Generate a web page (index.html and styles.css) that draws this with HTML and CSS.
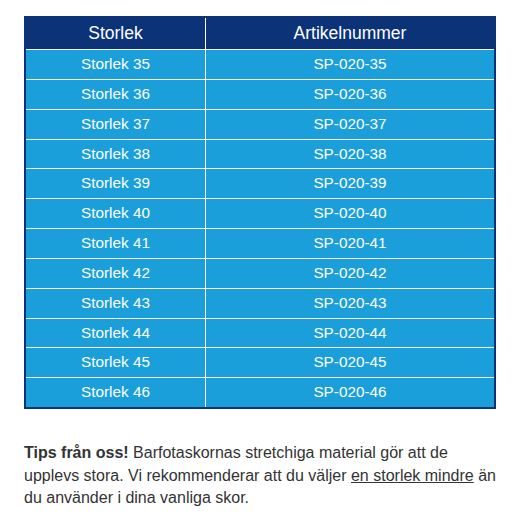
FILE: index.html
```html
<!DOCTYPE html>
<html lang="sv">
<head>
<meta charset="utf-8">
<title>Storlekar</title>
<link rel="stylesheet" href="styles.css">
</head>
<body>
<table class="sizes">
  <colgroup><col class="col-size"><col class="col-art"></colgroup>
  <thead>
    <tr><th>Storlek</th><th>Artikelnummer</th></tr>
  </thead>
  <tbody>
    <tr><td>Storlek 35</td><td>SP-020-35</td></tr>
    <tr><td>Storlek 36</td><td>SP-020-36</td></tr>
    <tr><td>Storlek 37</td><td>SP-020-37</td></tr>
    <tr><td>Storlek 38</td><td>SP-020-38</td></tr>
    <tr><td>Storlek 39</td><td>SP-020-39</td></tr>
    <tr><td>Storlek 40</td><td>SP-020-40</td></tr>
    <tr><td>Storlek 41</td><td>SP-020-41</td></tr>
    <tr><td>Storlek 42</td><td>SP-020-42</td></tr>
    <tr><td>Storlek 43</td><td>SP-020-43</td></tr>
    <tr><td>Storlek 44</td><td>SP-020-44</td></tr>
    <tr><td>Storlek 45</td><td>SP-020-45</td></tr>
    <tr><td>Storlek 46</td><td>SP-020-46</td></tr>
  </tbody>
</table>
<p class="tip"><strong>Tips från oss!</strong> Barfotaskornas stretchiga material gör att de upplevs stora. Vi rekommenderar att du väljer <a href="#" class="tip-link">en storlek mindre</a> än du använder i dina vanliga skor.</p>
</body>
</html>
```
FILE: styles.css
```css
html, body {
  margin: 0;
  background: #ffffff;
}
body {
  padding: 16px 24px;
  font-family: "Liberation Sans", Arial, sans-serif;
}
.sizes {
  width: 472px;
  table-layout: fixed;
  border-collapse: separate;
  border-spacing: 0;
  border: 2px solid #0c3378;
}
.col-size { width: 180px; }
.col-art { width: 288px; }
.sizes th,
.sizes td {
  padding: 0;
  text-align: center;
  color: #ffffff;
  font-weight: normal;
}
.sizes th {
  background: #0c3378;
  font-size: 17.5px;
  height: 31px;
  line-height: 31px;
  border-bottom: 1px solid #ffffff;
}
.sizes th:first-child {
  border-right: 1px solid #ffffff;
}
.sizes td {
  background: #1a9fdb;
  font-size: 15.3px;
  height: 28.85px;
  line-height: 28.85px;
  border-bottom: 1px solid #ffffff;
}
.sizes tr:last-child td {
  border-bottom: none;
}
.sizes td:first-child {
  border-right: 1px solid #ffffff;
}
.tip {
  margin: 33px -8px 0 0;
  font-size: 16px;
  line-height: 22.5px;
  color: #333333;
}
.tip strong {
  color: #333333;
}
.tip-link {
  color: #333333;
  text-decoration: underline;
}
```
